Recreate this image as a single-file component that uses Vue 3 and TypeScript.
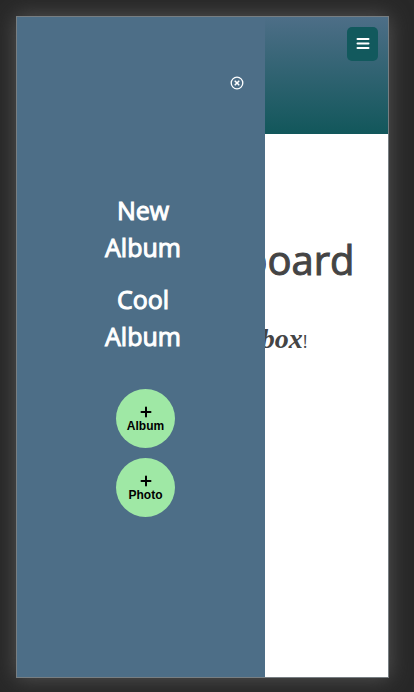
<script setup lang="ts">
import { ref } from 'vue'

const menuOpen = ref(true)
const albums: string[] = ['New Album', 'Cool Album']
const actions: string[] = ['Album', 'Photo']
</script>

<template>
  <div class="device">
    <header class="banner">
      <button class="menu-button" type="button" aria-label="Open menu" @click="menuOpen = true">
        <svg width="14" height="14" viewBox="0 0 14 14" aria-hidden="true">
          <path d="M1.5 2h11M1.5 6.5h11M1.5 11h11" stroke="currentColor" stroke-width="2" stroke-linecap="round" />
        </svg>
      </button>
    </header>

    <main class="content">
      <h1>Your Dashboard</h1>
      <p class="welcome">Welcome to <span class="brand">Snapbox</span>!</p>
    </main>

    <aside v-if="menuOpen" class="drawer">
      <button class="close" type="button" aria-label="Close menu" @click="menuOpen = false">
        <svg width="14" height="14" viewBox="0 0 14 14" fill="none" stroke="currentColor" aria-hidden="true">
          <circle cx="7" cy="7" r="5.8" stroke-width="1.3" />
          <path d="M5.2 5.2l3.6 3.6M8.8 5.2l-3.6 3.6" stroke-width="1.6" stroke-linecap="round" />
        </svg>
      </button>
      <nav class="albums">
        <a v-for="album in albums" :key="album" href="#">{{ album }}</a>
      </nav>
      <div class="actions">
        <button v-for="action in actions" :key="action" class="add" type="button">
          <svg width="12" height="12" viewBox="0 0 12 12" aria-hidden="true">
            <path d="M6 1.5v9M1.5 6h9" stroke="currentColor" stroke-width="2" stroke-linecap="round" />
          </svg>
          <span>{{ action }}</span>
        </button>
      </div>
    </aside>
  </div>
</template>

<style>
body {
  background: #282828;
}
</style>

<style scoped>
.device {
  position: relative;
  box-sizing: border-box;
  min-height: calc(100vh - 30px);
  margin: 16px 25px 14px 16px;
  border: 1px solid #777e82;
  overflow: hidden;
  background: #fff;
  box-shadow: 0 0 20px #555;
  color: #444;
  font-family: "Open Sans", sans-serif;
}

.banner {
  display: flex;
  justify-content: flex-end;
  align-items: flex-start;
  box-sizing: border-box;
  height: 117px;
  padding: 10px;
  background: linear-gradient(#4d6e87, #12575b);
}

.menu-button {
  display: grid;
  place-items: center;
  width: 31px;
  height: 34px;
  padding: 0;
  border: 0;
  border-radius: 5px;
  background: #12595d;
  color: #fff;
}

.content {
  display: flex;
  flex-direction: column;
  align-items: center;
  padding-top: 98px;
  white-space: nowrap;
}

h1 {
  margin: 0;
  font-size: 40px;
  font-weight: 500;
  line-height: 56px;
  -webkit-text-stroke: 1px currentColor;
}

.welcome {
  margin: 31px 0 0;
  font-size: 18px;
  line-height: 40px;
}

.brand {
  font-family: "Liberation Serif", serif;
  font-size: 28px;
  font-style: italic;
  font-weight: 700;
}

.drawer {
  position: absolute;
  top: 0;
  bottom: 0;
  left: 0;
  display: flex;
  flex-direction: column;
  align-items: center;
  box-sizing: border-box;
  width: 248px;
  padding: 59px 21px 0 30px;
  background: #4d6e87;
}

.close {
  display: grid;
  align-self: flex-end;
  padding: 0;
  border: 0;
  background: none;
  color: #fff;
}

.albums {
  display: flex;
  flex-direction: column;
  gap: 15px;
  width: 100px;
  margin-top: 102px;
  padding-right: 5px;
  text-align: center;
}

.albums a {
  color: #fff;
  font-size: 25px;
  font-weight: 400;
  line-height: 37px;
  text-decoration: none;
  -webkit-text-stroke: 1px currentColor;
}

.actions {
  display: flex;
  flex-direction: column;
  gap: 10px;
  margin-top: 34px;
}

.add {
  display: flex;
  flex-direction: column;
  align-items: center;
  justify-content: center;
  box-sizing: border-box;
  width: 59px;
  height: 59px;
  padding: 2px 0 0;
  border: 0;
  border-radius: 50%;
  background: #9fe8a5;
  color: #000;
  font-family: "Liberation Sans", sans-serif;
  font-size: 12px;
  font-weight: 700;
  line-height: 16px;
}
</style>
